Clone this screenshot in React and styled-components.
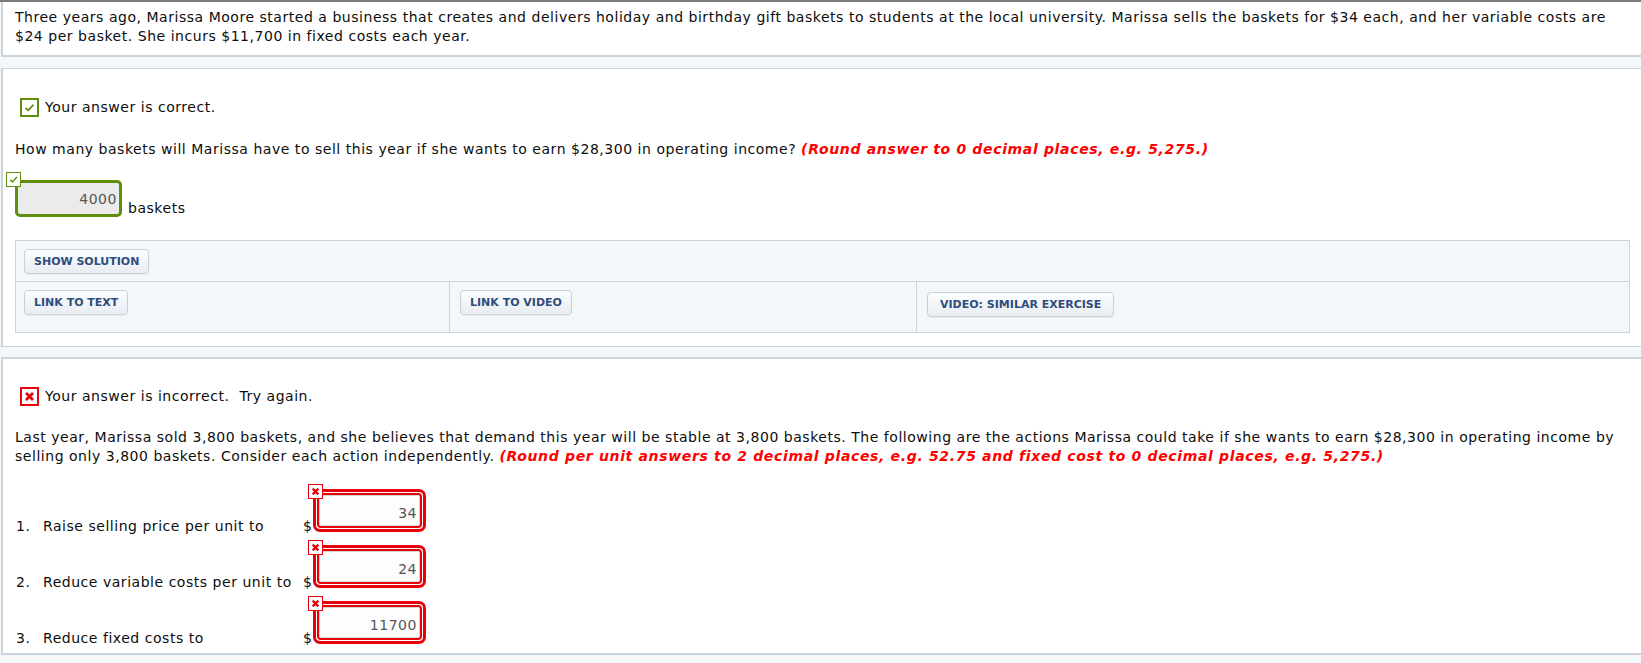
import React from "react";
import styled, { createGlobalStyle } from "styled-components";

const GREEN = "#5f8d0e";
const RED = "#e8000b";
const LINE = "#cbd3dd";

const GlobalStyle = createGlobalStyle`
  html, body {
    margin: 0;
    padding: 0;
  }
  body {
    background: #f4f7fa;
    font-family: "DejaVu Sans", Verdana, sans-serif;
    font-size: 14px;
    letter-spacing: 0.53px;
    line-height: 19px;
    color: #0d0d0d;
    overflow: hidden;
  }
`;

const Page = styled.div`
  border-top: 2px solid #7b7b7b;
  padding-bottom: 10px;
`;

const Panel = styled.section`
  margin: ${(p) => p.$gap || 0}px 0 0 1px;
  background: #fff;
  border-left: 2px solid ${LINE};
  border-top: ${(p) => p.$top || 0}px solid ${LINE};
  border-bottom: ${(p) => p.$bottom || 1}px solid ${LINE};
  padding: ${(p) => p.$pad};
`;

const Text = styled.p`
  margin: ${(p) => p.$mt || 0}px 0 0;
  white-space: nowrap;
`;

const Hint = styled.em`
  color: #f00;
  font-weight: bold;
  font-style: italic;
  letter-spacing: 0.66px;
`;

const Status = styled.div`
  display: flex;
  align-items: center;
  gap: 6px;
  padding-left: 5px;
  height: 19px;
`;

const StatusBox = styled.span`
  width: 19px;
  height: 19px;
  box-sizing: border-box;
  border: 2px solid ${(p) => p.$color};
  background: #fff;
  display: flex;
  align-items: center;
  justify-content: center;
`;

const Badge = styled.span`
  position: absolute;
  top: ${(p) => p.$top}px;
  left: ${(p) => p.$left}px;
  width: 15px;
  height: 15px;
  box-sizing: border-box;
  border: 1px solid ${(p) => p.$color};
  background: #fff;
  display: flex;
  align-items: center;
  justify-content: center;
  z-index: 1;
`;

const AnswerLine = styled.div`
  display: flex;
  align-items: flex-end;
  gap: 6px;
  margin-top: 13px;
`;

const FieldWrap = styled.div`
  position: relative;
  padding-top: ${(p) => p.$pt}px;
`;

const CorrectInput = styled.input`
  display: block;
  width: 107px;
  height: 37px;
  box-sizing: border-box;
  border: 3px solid ${GREEN};
  border-radius: 5px;
  background: #ebebeb;
  text-align: right;
  padding: 0 2px 0 0;
  font: inherit;
  letter-spacing: inherit;
  color: #555;
  outline: none;
`;

const WrongFrame = styled.div`
  border: 3px solid ${RED};
  border-radius: 7px;
  padding: 1px;
  background: #fff;
`;

const WrongInner = styled.div`
  border: 2px solid ${RED};
  border-radius: 4px;
`;

const WrongInput = styled.input`
  display: block;
  width: 101px;
  height: 31px;
  box-sizing: border-box;
  border: 1px solid #d4d4d4;
  border-radius: 2px;
  background: #fdfdfd;
  text-align: right;
  padding: 4px 2px 0 0;
  font: inherit;
  letter-spacing: inherit;
  color: #555;
  outline: none;
`;

const Unit = styled.span`
  margin-bottom: -1px;
`;

const Resources = styled.div`
  margin-top: 23px;
  border: 1px solid ${LINE};
  background: #f4f7fa;
`;

const ResRow = styled.div`
  display: grid;
  grid-template-columns: ${(p) => p.$cols};
  & + & {
    border-top: 1px solid ${LINE};
  }
`;

const ResCell = styled.div`
  padding: ${(p) => p.$pad};
  & + & {
    border-left: 1px solid ${LINE};
  }
`;

const ResButton = styled.button`
  height: 25px;
  padding: 0 ${(p) => (p.$wide ? 12 : 9)}px;
  border: 1px solid #c8d0da;
  border-radius: 4px;
  background: linear-gradient(#fcfdfe, #e8edf2);
  box-shadow: 0 1px 0 rgba(0, 0, 0, 0.04);
  font-family: "DejaVu Sans", Verdana, sans-serif;
  font-size: 11px;
  font-weight: bold;
  letter-spacing: normal;
  color: #2e4d7b;
  text-transform: uppercase;
  cursor: pointer;
`;

const Actions = styled.div`
  margin-top: 17px;
`;

const ActionRow = styled.div`
  display: flex;
  align-items: flex-end;
  & + & {
    margin-top: 7px;
  }
`;

const Cell = styled.span`
  width: ${(p) => p.$w}px;
  padding-left: ${(p) => p.$pl || 0}px;
  box-sizing: border-box;
  margin-bottom: -4px;
  white-space: nowrap;
`;

const CheckMark = ({ size = 13 }) => (
  <svg width={size} height={size} viewBox="0 0 13 13">
    <polyline
      points="2.5,6.8 5.2,9.4 10.5,3.6"
      fill="none"
      stroke={GREEN}
      strokeWidth="1.6"
    />
  </svg>
);

const Cross = ({ size = 11 }) => (
  <svg width={size} height={size} viewBox="0 0 11 11">
    <path d="M2 2 L9 9 M9 2 L2 9" stroke={RED} strokeWidth="2.8" />
  </svg>
);

function WrongField({ value }) {
  return (
    <FieldWrap $pt={6}>
      <Badge $top={1} $left={-5} $color={RED}>
        <Cross size={9} />
      </Badge>
      <WrongFrame>
        <WrongInner>
          <WrongInput value={value} readOnly />
        </WrongInner>
      </WrongFrame>
    </FieldWrap>
  );
}

const actions = [
  { n: "1.", label: "Raise selling price per unit to", value: "34" },
  { n: "2.", label: "Reduce variable costs per unit to", value: "24" },
  { n: "3.", label: "Reduce fixed costs to", value: "11700" },
];

export default function App() {
  return (
    <>
      <GlobalStyle />
      <Page>
        <Panel $bottom={2} $pad="6px 11px 9px 12px">
          <Text>
            Three years ago, Marissa Moore started a business that creates and
            delivers holiday and birthday gift baskets to students at the local
            university. Marissa sells the baskets for $34 each, and her
            variable costs are
            <br />
            $24 per basket. She incurs $11,700 in fixed costs each year.
          </Text>
        </Panel>

        <Panel $gap={11} $top={1} $bottom={1} $pad="29px 11px 13px 12px">
          <Status>
            <StatusBox $color={GREEN}>
              <CheckMark />
            </StatusBox>
            Your answer is correct.
          </Status>
          <Text $mt={23}>
            How many baskets will Marissa have to sell this year if she wants
            to earn $28,300 in operating income?{" "}
            <Hint>(Round answer to 0 decimal places, e.g. 5,275.)</Hint>
          </Text>
          <AnswerLine>
            <FieldWrap $pt={8}>
              <Badge $top={0} $left={-9} $color={GREEN}>
                <CheckMark size={11} />
              </Badge>
              <CorrectInput value="4000" readOnly />
            </FieldWrap>
            <Unit>baskets</Unit>
          </AnswerLine>
          <Resources>
            <ResRow $cols="1fr">
              <ResCell $pad="8px 8px 7px">
                <ResButton>Show Solution</ResButton>
              </ResCell>
            </ResRow>
            <ResRow $cols="433px 467px 1fr">
              <ResCell $pad="8px 8px 17px">
                <ResButton>Link to Text</ResButton>
              </ResCell>
              <ResCell $pad="8px 10px 17px">
                <ResButton>Link to Video</ResButton>
              </ResCell>
              <ResCell $pad="10px 10px 15px">
                <ResButton $wide>Video: Similar Exercise</ResButton>
              </ResCell>
            </ResRow>
          </Resources>
        </Panel>

        <Panel $gap={10} $top={2} $bottom={2} $pad="28px 11px 9px 12px">
          <Status>
            <StatusBox $color={RED}>
              <Cross />
            </StatusBox>
            Your answer is incorrect.&nbsp; Try again.
          </Status>
          <Text $mt={22}>
            Last year, Marissa sold 3,800 baskets, and she believes that demand
            this year will be stable at 3,800 baskets. The following are the
            actions Marissa could take if she wants to earn $28,300 in operating
            income by
            <br />
            selling only 3,800 baskets. Consider each action independently.{" "}
            <Hint>
              (Round per unit answers to 2 decimal places, e.g. 52.75 and fixed
              cost to 0 decimal places, e.g. 5,275.)
            </Hint>
          </Text>
          <Actions>
            {actions.map((a) => (
              <ActionRow key={a.n}>
                <Cell $w={28} $pl={1}>
                  {a.n}
                </Cell>
                <Cell $w={260}>{a.label}</Cell>
                <Cell $w={10}>$</Cell>
                <WrongField value={a.value} />
              </ActionRow>
            ))}
          </Actions>
        </Panel>
      </Page>
    </>
  );
}
